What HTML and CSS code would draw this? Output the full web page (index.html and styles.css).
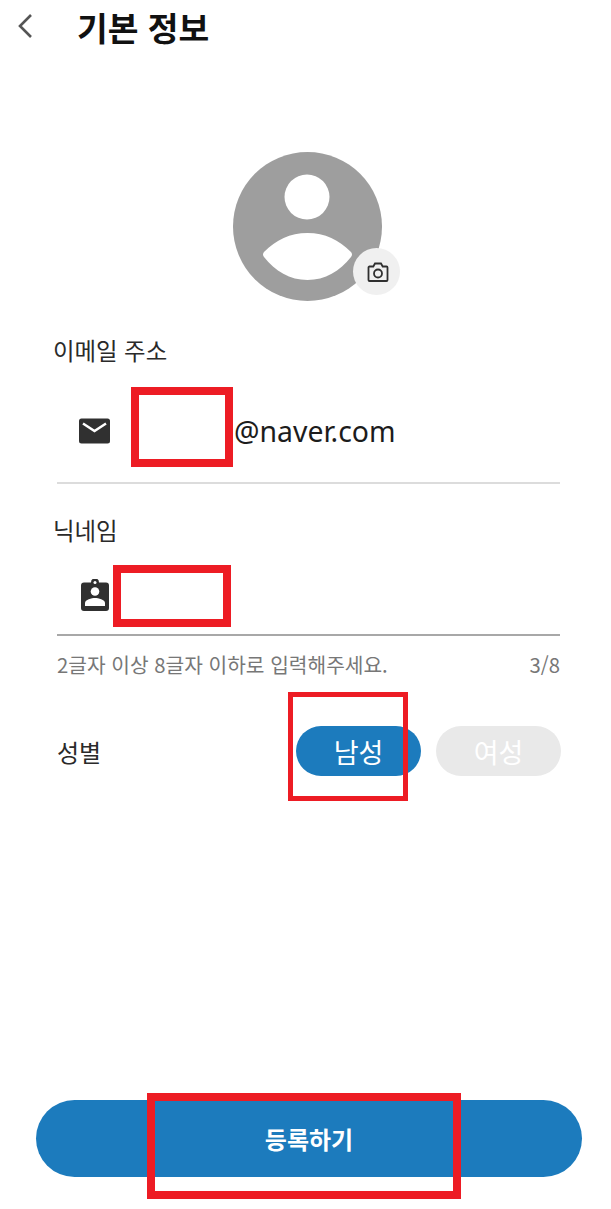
FILE: index.html
```html
<!DOCTYPE html>
<html lang="ko">
<head>
<meta charset="utf-8">
<title>기본 정보</title>
<link rel="stylesheet" href="styles.css">
</head>
<body>
<div class="page">
  <header class="header">
    <svg class="back" width="16" height="26" viewBox="0 0 16 26"><path d="M14 2 3 13l11 11" fill="none" stroke="#555" stroke-width="2.6"/></svg>
    <h1 class="title">기본 정보</h1>
  </header>
  <div class="avatar-wrap">
    <div class="avatar">
      <svg width="149" height="149" viewBox="0 0 149 149">
        <circle cx="74.5" cy="74.5" r="74.5" fill="#9e9e9e"/>
        <circle cx="74" cy="45" r="22.5" fill="#fff"/>
        <path d="M31 100C43 88 57 81 74.500 81S106 88 118 100Q120 102.500 118 105C107 119 92 128 74.500 128S42 119 31 105Q29 102.500 31 100Z" fill="#fff"/>
      </svg>
      <span class="camera">
        <svg width="22" height="20" viewBox="0 0 22 20"><path d="M2.500 4.500h3.800L8 1.500h6l1.700 3h3.800a1 1 0 0 1 1 1V18a1 1 0 0 1-1 1h-17a1 1 0 0 1-1-1V5.500a1 1 0 0 1 1-1Z" fill="none" stroke="#2f2f2f" stroke-width="1.800"/><circle cx="11" cy="11.500" r="4" fill="none" stroke="#2f2f2f" stroke-width="1.800"/></svg>
      </span>
    </div>
  </div>
  <section class="field email">
    <div class="label">이메일 주소</div>
    <div class="input-row email-row">
      <svg class="icon" width="31" height="26" viewBox="0 0 31 26"><rect width="31" height="25" y=".5" rx="2.500" fill="#303030"/><path d="m4 5.500 11.500 7.500 11.500-7.500" fill="none" stroke="#fff" stroke-width="2.500"/></svg>
      <span class="email-text">@naver.com</span>
      <span class="mask mask-email"></span>
    </div>
  </section>
  <section class="field nick">
    <div class="label">닉네임</div>
    <div class="input-row nick-row">
      <svg class="icon" width="28" height="32" viewBox="0 0 28 32"><path d="M3 3.500h7a4 4 0 0 1 8 0h7a3 3 0 0 1 3 3V29a3 3 0 0 1-3 3H3a3 3 0 0 1-3-3V6.500a3 3 0 0 1 3-3Z" fill="#303030"/><circle cx="14" cy="3.500" r="1.500" fill="#fff"/><circle cx="14" cy="12.500" r="4.300" fill="#fff"/><path d="M4 27v-3c0-3.300 6.700-5 10-5s10 1.700 10 5v3Z" fill="#fff"/></svg>
      <span class="mask mask-nick"></span>
    </div>
    <div class="hint"><span>2글자 이상 8글자 이하로 입력해주세요.</span><span>3/8</span></div>
  </section>
  <section class="gender">
    <span class="gender-label">성별</span>
    <div class="gender-opts">
      <button class="pill on">남성</button>
      <button class="pill off">여성</button>
    </div>
    <span class="mask mask-gender"></span>
  </section>
  <div class="submit-wrap">
    <button class="submit">등록하기</button>
    <span class="mask mask-submit"></span>
  </div>
</div>
</body>
</html>
```
FILE: styles.css
```css
* { box-sizing: border-box; }
html, body { margin: 0; padding: 0; background: #fff; }
body { font-family: "Noto Sans CJK KR", "Noto Sans", sans-serif; color: #1c1c1c; }
.page { width: 611px; height: 1209px; display: flex; flex-direction: column; overflow: hidden; }

.header { height: 54px; display: flex; align-items: center; padding-left: 17px; gap: 44px; }
.back { flex: none; margin-top: -2px; }
.title { margin: 0; font-size: 33.4px; font-weight: 700; line-height: 54px; color: #111; }

.avatar-wrap { margin-top: 98px; display: flex; justify-content: center; padding-left: 4px; }
.avatar { position: relative; width: 149px; height: 149px; }
.avatar svg { display: block; }
.camera { position: absolute; left: 120px; top: 96px; width: 47px; height: 47px; border-radius: 50%; background: #f0f0f0; display: flex; align-items: center; justify-content: center; padding-left: 2px; }

.field { padding: 0 51px 0 53px; }
.email { margin-top: 31px; }
.label { font-size: 23.4px; line-height: 36px; color: #2a2a2a; }
.input-row { position: relative; display: flex; align-items: center; margin-left: 4px; }
.icon { flex: none; }
.email-row { height: 116px; padding: 11px 0 0 22px; border-bottom: 2px solid #dcdcdc; }
.email-text { font-family: "Noto Sans", sans-serif; font-size: 28.4px; margin-left: 124px; color: #1c1c1c; }
.nick { margin-top: 28px; }
.nick-row { height: 88px; padding: 8px 0 0 24px; border-bottom: 2px solid #a8a8a8; }
.hint { display: flex; justify-content: space-between; margin-left: 4px; margin-top: 14px; font-size: 20.3px; line-height: 28px; color: #777; }

.gender { position: relative; margin-top: 48px; padding: 0 50px 0 57px; display: flex; align-items: center; justify-content: space-between; }
.gender-label { font-size: 24px; color: #2a2a2a; }
.gender-opts { display: flex; gap: 15px; }
.pill { width: 125px; height: 50px; border: 0; border-radius: 25px; font: 400 27px "Noto Sans CJK KR", sans-serif; color: #fff; padding: 0; }
.on { background: #1c7bbd; }
.off { background: #e9e9e9; }

.submit-wrap { position: relative; margin-top: auto; padding: 0 29px 32px 36px; }
.submit { display: block; width: 100%; height: 77px; border: 0; border-radius: 39px; background: #1c7bbd; color: #fff; font: 700 24px "Noto Sans CJK KR", sans-serif; padding: 0; }

.mask { position: absolute; border: 8px solid #ed1c24; }
.mask-email { left: 74px; top: 19px; width: 102px; height: 80px; background: #fff; }
.mask-nick { left: 56px; top: 17px; width: 118px; height: 62px; background: #fff; }
.mask-gender { left: 288px; top: -34px; width: 120px; height: 109px; border-width: 5px; }
.mask-submit { left: 147px; top: -7px; width: 314px; height: 106px; }
```
